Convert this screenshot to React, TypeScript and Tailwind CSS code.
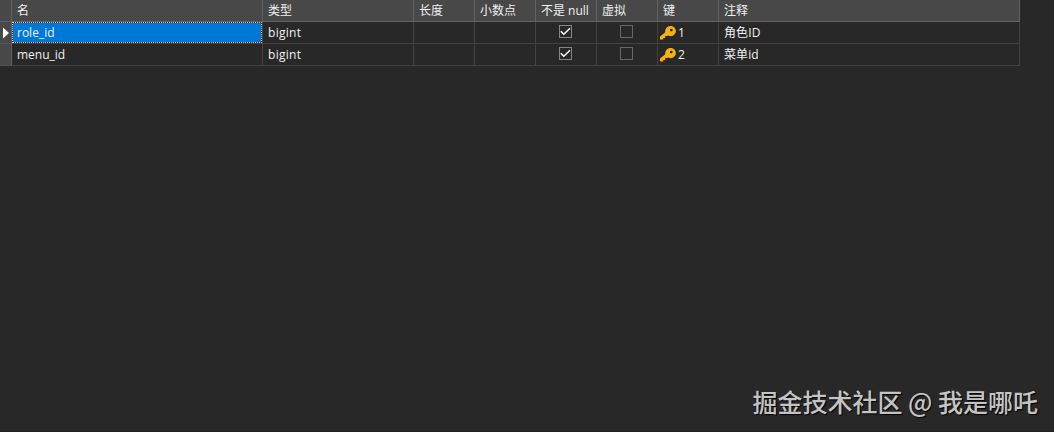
type Column = { title: string; width: string };

type Field = {
  name: string;
  type: string;
  notNull: boolean;
  virtual: boolean;
  key: number;
  comment: string;
};

const columns: Column[] = [
  { title: "名", width: "w-[251px]" },
  { title: "类型", width: "w-[151px]" },
  { title: "长度", width: "w-[61px]" },
  { title: "小数点", width: "w-[61px]" },
  { title: "不是 null", width: "w-[61px]" },
  { title: "虚拟", width: "w-[61px]" },
  { title: "键", width: "w-[61px]" },
  { title: "注释", width: "w-[301px]" },
];

const fields: Field[] = [
  { name: "role_id", type: "bigint", notNull: true, virtual: false, key: 1, comment: "角色ID" },
  { name: "menu_id", type: "bigint", notNull: true, virtual: false, key: 2, comment: "菜单id" },
];

const cell = "flex h-full shrink-0 items-center whitespace-nowrap border-r border-[#424242]";

function Checkbox({ checked }: { checked: boolean }) {
  return (
    <svg width="13" height="13" viewBox="0 0 13 13" fill="none" className="mb-[3px]">
      <rect x="0.5" y="0.5" width="12" height="12" stroke={checked ? "#858585" : "#686868"} />
      {checked && <path d="M1.8 6.2 4.8 9.2 11 3.2" stroke="#fff" strokeWidth="1.5" />}
    </svg>
  );
}

function KeyIcon() {
  return (
    <svg width="16" height="14" viewBox="0 0 16 14" className="shrink-0">
      <path
        fill="#f9b010"
        fillRule="evenodd"
        d="M10.3 0a5.1 5.1 0 0 0-5 6.2L0 10.6V13.6h3.2v-1.7h2V10h2.1l.9-.5A5.1 5.1 0 1 0 10.3 0Zm1 2.7a1.4 1.4 0 1 1 0 2.8 1.4 1.4 0 0 1 0-2.8Z"
      />
    </svg>
  );
}

function Row({ field, current }: { field: Field; current: boolean }) {
  return (
    <div className="flex h-[22px] w-[1020px] border-b border-[#424242]">
      <div className="flex h-[22px] w-3 shrink-0 items-center border-r border-b border-r-[#626262] border-b-[#555] bg-[#484848]">
        {current && (
          <svg width="6" height="12" viewBox="0 0 6 12" className="ml-[3px]">
            <path d="M0 0.5 6 6 0 11.5Z" fill="#fff" />
          </svg>
        )}
      </div>
      <div className={`${cell} w-[251px]`}>
        <div
          className={`flex h-full w-full items-center border pl-1 ${
            current ? "border-dotted border-[#d8c8b0] bg-[#0078d7] bg-clip-padding" : "border-transparent"
          }`}
        >
          {field.name}
        </div>
      </div>
      <div className={`${cell} w-[151px] pl-[5px] tracking-[0.3px]`}>{field.type}</div>
      <div className={`${cell} w-[61px]`} />
      <div className={`${cell} w-[61px]`} />
      <div className={`${cell} w-[61px] pl-[23px]`}>
        <Checkbox checked={field.notNull} />
      </div>
      <div className={`${cell} w-[61px] pl-[23px]`}>
        <Checkbox checked={field.virtual} />
      </div>
      <div className={`${cell} w-[61px] gap-0.5 pl-0.5`}>
        <KeyIcon />
        {field.key}
      </div>
      <div className={`${cell} w-[301px] pl-[5px] tracking-[0.1px]`}>{field.comment}</div>
    </div>
  );
}

export default function App() {
  return (
    <div className="flex h-[432px] w-[1054px] flex-col overflow-hidden border-b border-[#202024] bg-[#282828] font-['Open_Sans','Noto_Sans_CJK_SC',sans-serif] text-xs leading-5 text-[#f0f0f0]">
      <div className="flex h-[22px] w-[1020px] shrink-0 border-b border-[#626262] bg-[#484848]">
        <div className="w-3 shrink-0 border-r border-[#626262]" />
        {columns.map((c) => (
          <div
            key={c.title}
            className={`flex h-full shrink-0 items-center whitespace-nowrap border-r border-[#626262] pl-[5px] ${c.width}`}
          >
            {c.title}
          </div>
        ))}
      </div>
      {fields.map((f, i) => (
        <Row key={f.name} field={f} current={i === 0} />
      ))}
      <div className="mt-auto mr-4 mb-3 self-end whitespace-nowrap font-['Noto_Sans_CJK_SC',sans-serif] text-[25px] leading-9 font-medium text-[#c4c4c4] [text-shadow:1px_1px_1px_#000]">
        掘金技术社区 @ 我是哪吒
      </div>
    </div>
  );
}
